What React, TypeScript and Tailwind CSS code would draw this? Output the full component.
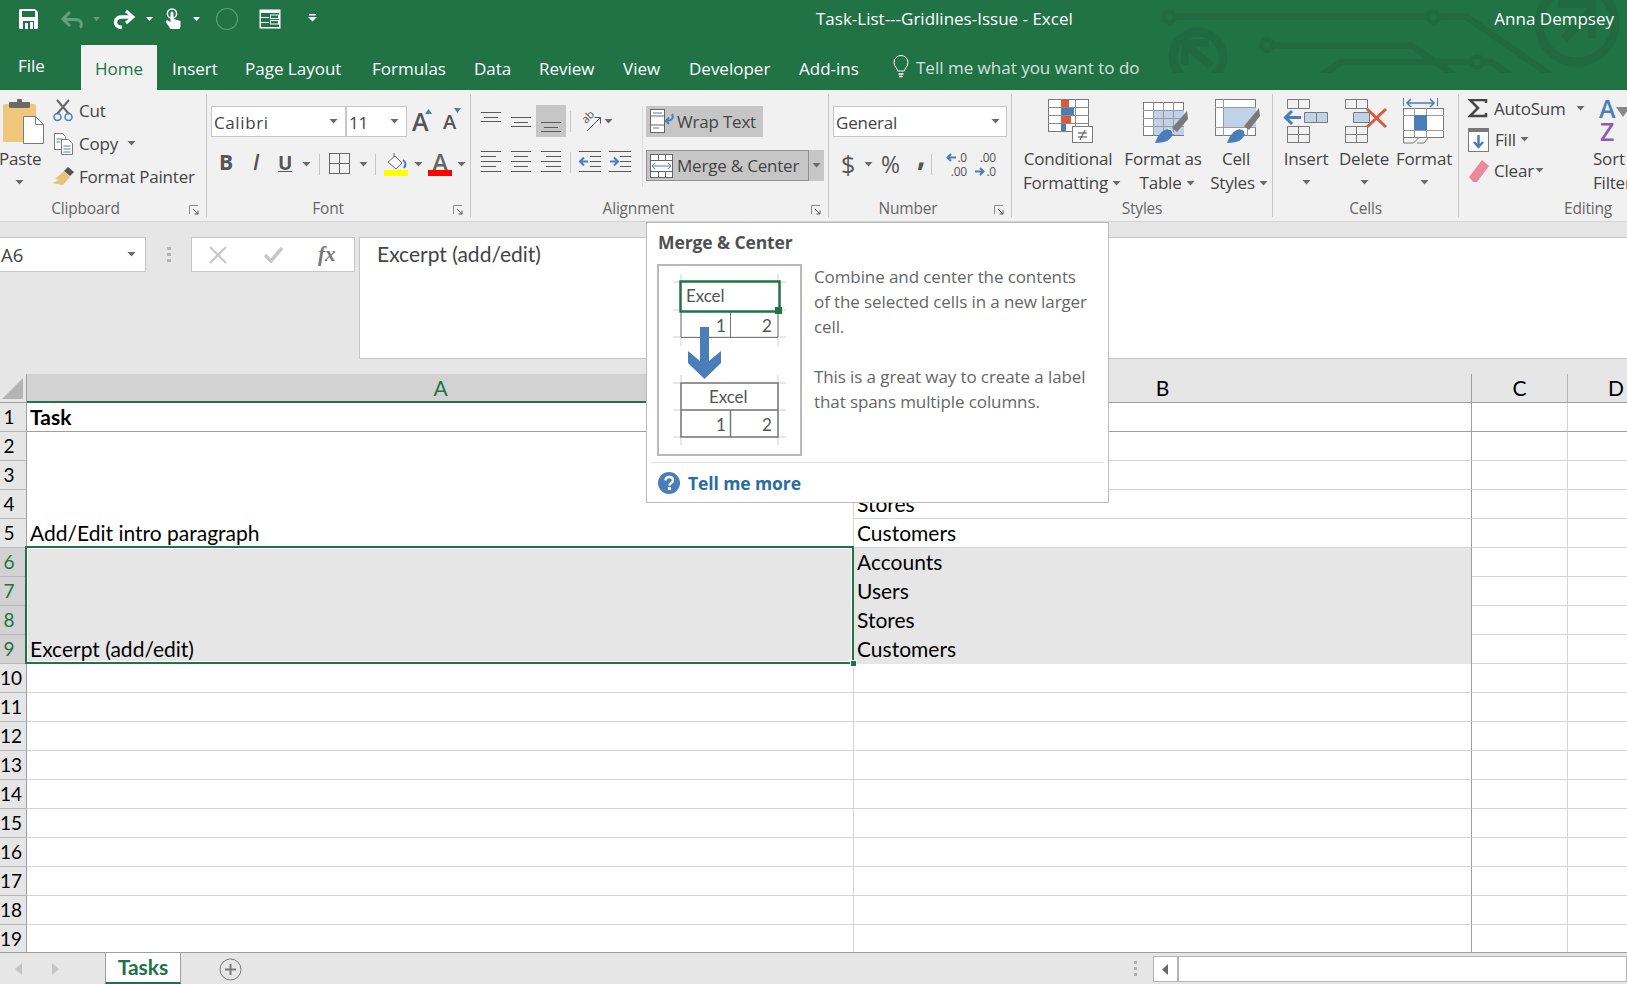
import React from "react";

const GREEN = "#217346";
const BLUE = "#4a7eba";
const RED = "#dc5939";

const Caret = ({ className = "", white = false }: { className?: string; white?: boolean }) => (
  <svg width="9" height="5" viewBox="0 0 9 5" className={`shrink-0 ${className}`}>
    <polygon points="0.5,0 8.5,0 4.5,4.5" fill={white ? "#ffffff" : "#6a6a6a"} />
  </svg>
);

const Launcher = () => (
  <svg width="10" height="10" viewBox="0 0 10 10" className="absolute right-[7px] top-[8px]">
    <path d="M0.5 9V0.5H9" fill="none" stroke="#8a8a8a" />
    <path d="M4 4L9 9M9 5.5V9H5.5" fill="none" stroke="#555555" />
  </svg>
);

const GroupLabel = ({ children, className = "", launcher = true }: { children: string; className?: string; launcher?: boolean }) => (
  <div className={`relative mt-auto -mb-[4px] h-[24px] flex items-center justify-center text-[15.5px] text-[#666666] ${className}`}>
    {children}
    {launcher && <Launcher />}
  </div>
);

// align-icon: list of [x1, x2, y]
const Lines = ({ rows, blue }: { rows: number[][]; blue?: React.ReactNode }) => (
  <svg width="24" height="24" viewBox="0 0 24 24">
    {rows.map((r, i) => (
      <line key={i} x1={r[0]} x2={r[1]} y1={r[2] + 0.5} y2={r[2] + 0.5} stroke="#5a5a5a" />
    ))}
    {blue}
  </svg>
);

const Sep = ({ className = "" }: { className?: string }) => <div className={`w-px bg-[#c6c6c6] ${className}`} />;

const QuickAccess = () => (
  <div className="w-[816px] h-full relative shrink-0">
    <svg width="330" height="40" viewBox="0 0 330 40" className="absolute left-0 top-0">
      {/* save */}
      <path d="M19 10.5a1.5 1.5 0 0 1 1.5-1.5H35l3 3v15.5a1.5 1.5 0 0 1-1.5 1.5h-16a1.5 1.5 0 0 1-1.5-1.5z" fill="#ffffff" />
      <rect x="22" y="11" width="13" height="6" fill={GREEN} />
      <rect x="23" y="21" width="11" height="8" fill={GREEN} />
      <rect x="25" y="23" width="3" height="6" fill="#ffffff" />
      <rect x="30" y="22" width="3" height="7" fill="#ffffff" />
      {/* undo (dim) */}
      <path d="M80 27.5c1.5-1 1.5-3 1-5-.8-2.5-3.5-3-6-3H63" fill="none" stroke="#64a07f" strokeWidth="3" />
      <path d="M70 12l-7 7 7 7" fill="none" stroke="#64a07f" strokeWidth="3" />
      <polygon points="93,17 100,17 96.5,21" fill="#64a07f" />
      {/* redo */}
      <path d="M122 27.5c-5-.5-7-3-6.5-6 .5-3 3-4.5 6.5-4.5h11" fill="none" stroke="#ffffff" strokeWidth="3.4" />
      <path d="M126 11l7 6-7 6" fill="none" stroke="#ffffff" strokeWidth="3" />
      <polygon points="146,17 153,17 149.5,21" fill="#ffffff" />
      {/* touch */}
      <circle cx="172" cy="13.5" r="4.6" fill="none" stroke="#ffffff" strokeWidth="1.5" />
      <path d="M170.5 13a1.5 1.5 0 0 1 3 0v6l7 2v5.5l-1 2.5h-9l-5-7.5 1.5-1.5 3.5 2z" fill="#ffffff" />
      <polygon points="193,17 200,17 196.5,21" fill="#ffffff" />
      {/* circle */}
      <circle cx="227" cy="19" r="10.5" fill="none" stroke="#5a9a78" strokeWidth="1.2" />
      {/* layout */}
      <rect x="259.5" y="9.5" width="21" height="19" fill="#ffffff" />
      <rect x="261" y="13" width="18" height="14" fill={GREEN} />
      <path d="M261 17.5h8M261 22.5h8" stroke="#ffffff" />
      <rect x="270.5" y="15" width="8" height="3.5" fill="none" stroke="#ffffff" />
      <rect x="270.5" y="20.5" width="8" height="3.5" fill="none" stroke="#ffffff" />
      {/* customize */}
      <rect x="309" y="14" width="7" height="1.5" fill="#ffffff" />
      <polygon points="308,17 317,17 312.5,21.5" fill="#ffffff" />
    </svg>
  </div>
);

const Circuit = () => (
  <svg width="477" height="73" viewBox="1150 0 477 73" className="absolute right-0 top-0" fill="none" stroke="#1f6a41">
    <path d="M1174 16.5H1428M1438 16.5H1466L1552 76" strokeWidth="6.5" />
    <circle cx="1169" cy="17" r="5.5" strokeWidth="4.5" />
    <circle cx="1433" cy="17" r="5.5" strokeWidth="4.5" />
    <circle cx="1198" cy="57" r="25" strokeWidth="9" />
    <path d="M1186 45L1211 66" strokeWidth="8" />
    <path d="M1185 65V43H1209" strokeWidth="7" />
    <path d="M1272 45.5H1412L1458 78" strokeWidth="6.5" />
    <circle cx="1267" cy="45" r="5.5" strokeWidth="4.5" />
    <path d="M1320 76L1342 62H1472M1482 62H1491L1512 76" strokeWidth="6.5" />
    <circle cx="1477" cy="62" r="5.5" strokeWidth="4.5" />
    <circle cx="1577" cy="24" r="38" strokeWidth="9" />
    <path d="M1564 39L1592 10" strokeWidth="9" />
    <path d="M1558 4H1592V38" strokeWidth="8" />
  </svg>
);

const tabs = [
  { label: "Insert", cls: "w-[73px]" },
  { label: "Page Layout", cls: "w-[127px]" },
  { label: "Formulas", cls: "w-[102px]" },
  { label: "Data", cls: "w-[65px]" },
  { label: "Review", cls: "w-[84px]" },
  { label: "View", cls: "w-[66px]" },
  { label: "Developer", cls: "w-[110px]" },
  { label: "Add-ins", cls: "w-[93px]" },
];

const TitleBar = () => (
  <div className="relative h-[90px] bg-[#217346] text-white">
    <Circuit />
    <div className="relative h-[45px] flex items-center text-[17px]">
      <QuickAccess />
      <div className="-mt-[7px]">Task-List---Gridlines-Issue - Excel</div>
      <div className="ml-auto pr-[13px] -mt-[7px]">Anna Dempsey</div>
    </div>
    <div className="relative h-[45px] flex text-[17px]">
      <div className="w-[81px] pl-[18px] pt-[9px] -mt-[1px]">File</div>
      <div className="w-[76px] h-[45px] bg-[#f1f1f1] text-[#217346] text-center leading-[47px]">Home</div>
      <div className="ml-[15px] flex leading-[47px]">
        {tabs.map((t) => (
          <div key={t.label} className={t.cls}>
            {t.label}
          </div>
        ))}
        <div className="flex items-center text-[#d3e3da]">
          <svg width="18" height="24" viewBox="0 0 18 24" className="mr-[6px] -mt-[2px]" fill="none" stroke="#ffffff">
            <path d="M5.5 16c0-3-3.5-4.5-3.5-8.5a7 7 0 0 1 14 0c0 4-3.5 5.5-3.5 8.5z" />
            <path d="M6.5 19h5M7 21.5h4" strokeWidth="1.5" />
          </svg>
          Tell me what you want to do
        </div>
      </div>
    </div>
  </div>
);

const ClipboardGroup = () => (
  <div className="w-[207px] shrink-0 flex flex-col border-r border-[#c6c6c6]">
    <div className="flex">
      <div className="w-[46px] shrink-0 relative">
        <svg width="46" height="53" viewBox="0 94 46 53" className="block">
          <rect x="3" y="104" width="33" height="38" rx="1.5" fill="#f0c87c" />
          <rect x="9" y="102" width="21" height="6" rx="1" fill="#6a6a6a" />
          <rect x="17" y="99" width="5" height="5" rx="1" fill="#6a6a6a" />
          <path d="M23.5 116.5h12l8 8v19h-20z" fill="#ffffff" stroke="#7a7a7a" />
          <path d="M35.5 116.5v8h8" fill="none" stroke="#7a7a7a" />
        </svg>
        <div className="leading-[24px] -ml-[1px]">Paste</div>
        <Caret className="ml-[15px] mt-[9px]" />
      </div>
      <div className="ml-[6px] flex flex-col">
        <div className="h-[33px] flex items-center">
          <svg width="27" height="24" viewBox="0 0 27 24">
            <path d="M5 1l12 14M17 1L5 15" stroke="#666666" strokeWidth="2" />
            <circle cx="5.5" cy="18" r="3.5" fill="none" stroke={BLUE} strokeWidth="1.5" />
            <circle cx="16.5" cy="18" r="3.5" fill="none" stroke={BLUE} strokeWidth="1.5" />
          </svg>
          Cut
        </div>
        <div className="h-[33px] flex items-center">
          <svg width="27" height="24" viewBox="0 0 27 24">
            <path d="M2.5 1.5h8l3 3v13h-11z" fill="#ffffff" stroke="#7a7a7a" />
            <path d="M9.5 7.5h7l4 4v11h-11z" fill="#ffffff" stroke="#7a7a7a" />
            <path d="M4.5 7h6M4.5 10h4M11.5 14h7M11.5 17h7M11.5 20h7" stroke={BLUE} />
          </svg>
          Copy
          <Caret className="ml-[9px]" />
        </div>
        <div className="h-[33px] flex items-center">
          <svg width="27" height="24" viewBox="0 0 27 24" className="-ml-[1px] mr-[1px]">
            <path d="M17 2l6 5-4 4-6-5z" fill="#555555" />
            <path d="M13 6l6 6-7 8-11-2 7-3-4-1z" fill="#e8c27a" />
          </svg>
          Format Painter
        </div>
      </div>
    </div>
    <GroupLabel className="pr-[35px]">Clipboard</GroupLabel>
  </div>
);

const FontGroup = () => (
  <div className="w-[264px] shrink-0 flex flex-col border-r border-[#c6c6c6]">
    <div className="flex items-center ml-[4px] mt-[12px]">
      <div className="w-[135px] h-[31px] bg-white border border-[#c6c6c6] flex items-center pl-[2px] pr-[7px]">
        <span className="tracking-[0.6px] pt-[2px]">Calibri</span>
        <Caret className="ml-auto" />
      </div>
      <div className="w-[61px] h-[31px] bg-white border border-[#c6c6c6] flex items-center pl-[2px] pr-[7px]">
        <span className="pt-[2px]">11</span>
        <Caret className="ml-auto" />
      </div>
      <div className="relative w-[31px] ml-[5px] text-[25px] font-semibold leading-none text-[#555555]">
        A
        <svg width="8" height="5" viewBox="0 0 8 5" className="absolute left-[13px] top-0">
          <polygon points="0,5 7,5 3.5,0" fill={BLUE} />
        </svg>
      </div>
      <div className="relative w-[20px] text-[20px] font-semibold leading-none text-[#555555]">
        A
        <svg width="8" height="5" viewBox="0 0 8 5" className="absolute left-[11px] -top-[4px]">
          <polygon points="0,0 7,0 3.5,5" fill={BLUE} />
        </svg>
      </div>
    </div>
    <div className="flex items-center mt-[15px] ml-[4px] h-[24px] text-[#555555]">
      <div className="w-[30px] text-center text-[21px] font-bold -mt-[2px]">B</div>
      <div className="w-[30px] text-center text-[21px] italic font-semibold -mt-[2px]">I</div>
      <div className="w-[28px] text-center text-[19px] font-bold underline -mt-[2px]">U</div>
      <Caret className="ml-[3px]" />
      <Sep className="h-[21px] ml-[8px]" />
      <svg width="22" height="22" viewBox="0 0 22 22" className="ml-[9px]" fill="none" stroke="#666666">
        <rect x="0.5" y="0.5" width="20" height="20" />
        <path d="M10.5 0v21M0 10.5h21" />
      </svg>
      <Caret className="ml-[8px]" />
      <Sep className="h-[21px] ml-[7px]" />
      <svg width="25" height="25" viewBox="0 0 25 25" className="ml-[8px]">
        <path d="M4 10l7-6 7 7-6 6z" fill="#ffffff" stroke="#666666" />
        <path d="M10 5V1" stroke="#666666" />
        <path d="M19 8c3 2 3 5 1 8" fill="none" stroke={BLUE} strokeWidth="2" />
        <rect x="0" y="18" width="24" height="6" fill="#ffff00" />
      </svg>
      <Caret className="ml-[5px]" />
      <div className="relative w-[24px] ml-[5px] h-[24px]">
        <div className="text-center text-[24px] leading-[20px] font-semibold text-[#666666]">A</div>
        <div className="absolute bottom-0 left-0 w-[24px] h-[6px] bg-[#ff0000]" />
      </div>
      <Caret className="ml-[5px]" />
    </div>
    <GroupLabel className="pr-[21px]">Font</GroupLabel>
  </div>
);

const AlignmentGroup = () => (
  <div className="w-[358px] shrink-0 flex flex-col border-r border-[#c6c6c6]">
    <div className="flex">
      <div className="w-[171px] shrink-0">
        <div className="flex items-center mt-[11px] ml-[5px] h-[32px]">
          <div className="w-[30px] h-[32px] flex justify-center items-center">
            <Lines rows={[[2, 22, 3], [5, 19, 8], [2, 22, 12]]} />
          </div>
          <div className="w-[30px] h-[32px] flex justify-center items-center">
            <Lines rows={[[2, 22, 8], [5, 19, 13], [2, 22, 17]]} />
          </div>
          <div className="w-[30px] h-[32px] flex justify-center items-center bg-[#c6c6c6]">
            <Lines rows={[[2, 22, 13], [5, 19, 18], [2, 22, 22]]} />
          </div>
          <Sep className="h-[21px] ml-[4px]" />
          <svg width="22" height="21" viewBox="0 0 22 21" className="ml-[9px] overflow-visible" fill="none" stroke="#555555">
            <text x="6" y="13" fontSize="11" fill="#555555" stroke="none" transform="rotate(-45 6 13)">ab</text>
            <path d="M7 20L20 7M14.5 6.500H20.500V12.500" />
          </svg>
          <Caret className="ml-[2px]" />
        </div>
        <div className="flex items-center mt-[13px] ml-[5px] h-[24px]">
          <div className="w-[30px] flex justify-center">
            <Lines rows={[[2, 22, 1], [2, 17, 6], [2, 22, 11], [2, 17, 16], [2, 22, 21]]} />
          </div>
          <div className="w-[30px] flex justify-center">
            <Lines rows={[[2, 22, 1], [5, 19, 6], [2, 22, 11], [5, 19, 16], [2, 22, 21]]} />
          </div>
          <div className="w-[30px] flex justify-center">
            <Lines rows={[[2, 22, 1], [7, 22, 6], [2, 22, 11], [7, 22, 16], [2, 22, 21]]} />
          </div>
          <Sep className="h-[21px] ml-[4px]" />
          <div className="ml-[7px]">
            <Lines
              rows={[[1, 23, 1], [12, 23, 6], [12, 23, 11], [12, 23, 16], [1, 23, 21]]}
              blue={<path d="M10 11.5H2M6 7.5l-4 4 4 4" fill="none" stroke={BLUE} strokeWidth="2" />}
            />
          </div>
          <div className="ml-[6px]">
            <Lines
              rows={[[1, 23, 1], [12, 23, 6], [12, 23, 11], [12, 23, 16], [1, 23, 21]]}
              blue={<path d="M2 11.5h8M6 7.5l4 4-4 4" fill="none" stroke={BLUE} strokeWidth="2" />}
            />
          </div>
        </div>
      </div>
      <div className="w-px h-[81px] mt-[12px] bg-[#dcdcdc]" />
      <div className="ml-[3px]">
        <div className="mt-[12px] w-[117px] h-[31px] bg-[#c6c6c6] flex items-center pl-[4px]">
          <svg width="26" height="25" viewBox="0 0 26 25" className="mr-[1px] shrink-0">
            <rect x="0.5" y="0.5" width="14" height="23" fill="#ffffff" stroke="#666666" />
            <path d="M0 7h14M0 16h14" stroke="#666666" />
            <path d="M3 4h9M3 19h6" stroke={BLUE} />
            <path d="M22 5c2 4 0 7-6 7M19 8.5l-3 3.5 3 3" fill="none" stroke={BLUE} strokeWidth="2" />
          </svg>
          <span>Wrap Text</span>
        </div>
        <div className="mt-[13px] flex">
          <div className="w-[163px] h-[31px] bg-[#c6c6c6] border border-[#8f8f8f] flex items-center pl-[3px]">
            <svg width="24" height="24" viewBox="0 0 24 24" className="mr-[3px] shrink-0">
              <rect x="0.5" y="0.5" width="22" height="23" fill="#ffffff" stroke="#666666" />
              <path d="M0 6.5h23M0 17.5h23M8.5 0v6M15.5 0v6M8.5 18v6M15.5 18v6" stroke="#666666" />
              <path d="M2 12h19M5 9l-3 3 3 3M18 9l3 3-3 3" fill="none" stroke={BLUE} />
            </svg>
            <span>Merge &amp; Center</span>
          </div>
          <div className="w-[15px] h-[31px] bg-[#c6c6c6] flex items-center justify-center">
            <Caret />
          </div>
        </div>
      </div>
    </div>
    <GroupLabel className="pr-[22px]">Alignment</GroupLabel>
  </div>
);

const NumberGroup = () => (
  <div className="w-[183px] shrink-0 flex flex-col border-r border-[#c6c6c6]">
    <div className="ml-[4px] mt-[12px] w-[174px] h-[31px] bg-white border border-[#c6c6c6] flex items-center pl-[2px] pr-[6px]">
      <span className="pt-[2px]">General</span>
      <Caret className="ml-auto" />
    </div>
    <div className="flex items-center mt-[15px] ml-[12px] h-[24px] text-[#555555]">
      <div className="text-[25px] w-[16px] leading-none">$</div>
      <Caret className="ml-[7px]" />
      <div className="ml-[8px] w-[24px] text-[23px] leading-none">%</div>
      <div className="ml-[12px] w-[7px] text-[30px] font-bold leading-[14px] -mt-[18px]">,</div>
      <Sep className="h-[21px] ml-[7px]" />
      <div className="ml-[8px] w-[27px] text-[12px] flex flex-col gap-px text-right">
        <div className="h-[13px] leading-[13px] flex items-center justify-end">
          <svg width="10" height="9" viewBox="0 0 10 9" className="mr-[1px]">
            <path d="M10 4.5H2M5 1L1.5 4.5 5 8" fill="none" stroke={BLUE} strokeWidth="2" />
          </svg>
          .0
        </div>
        <div className="h-[13px] leading-[13px]">.00</div>
      </div>
      <div className="ml-[7px] w-[22px] text-[12px] flex flex-col gap-px text-right">
        <div className="h-[13px] leading-[13px]">.00</div>
        <div className="h-[13px] leading-[13px] flex items-center justify-end">
          <svg width="10" height="9" viewBox="0 0 10 9" className="mr-[1px]">
            <path d="M0 4.5h8M5 1l3.5 3.5L5 8" fill="none" stroke={BLUE} strokeWidth="2" />
          </svg>
          .0
        </div>
      </div>
    </div>
    <GroupLabel className="pr-[24px]">Number</GroupLabel>
  </div>
);

const StylesGroup = () => (
  <div className="w-[261px] shrink-0 flex flex-col border-r border-[#c6c6c6]">
    <div className="flex">
      <div className="w-[112px] shrink-0 text-center leading-[24px]">
        <svg width="112" height="53" viewBox="1012 94 112 53" className="block">
          <rect x="1048.5" y="99.5" width="40" height="32" fill="#ffffff" stroke="#7a7a7a" />
          <path d="M1061.5 99v33M1075.5 99v33M1048 107.5h41M1048 115.5h41M1048 123.5h41" stroke="#8a8a8a" />
          <rect x="1061" y="100" width="8" height="7" fill={RED} />
          <rect x="1061" y="108" width="13" height="7" fill={BLUE} />
          <rect x="1061" y="116" width="10" height="7" fill={RED} />
          <rect x="1061" y="124" width="5" height="7" fill={BLUE} />
          <rect x="1072.5" y="126.5" width="20" height="16" fill="#ffffff" stroke="#7a7a7a" />
          <path d="M1078 133h9M1078 137h9M1085 130l-5 10" stroke="#444444" />
        </svg>
        <div>Conditional</div>
        <div className="flex items-center justify-center pl-[8px]">
          Formatting
          <Caret className="ml-[4px]" />
        </div>
      </div>
      <div className="w-[78px] shrink-0 text-center leading-[24px] whitespace-nowrap">
        <svg width="78" height="53" viewBox="1124 94 78 53" className="block">
          <rect x="1143.5" y="102.5" width="40" height="33" fill="#ffffff" stroke="#7a7a7a" />
          <rect x="1154" y="111" width="30" height="24" fill="#bfd2e8" />
          <path d="M1153.5 102v33M1163.5 102v33M1173.5 102v33M1143 110.5h41M1143 118.5h41M1143 126.5h41" stroke="#9a9a9a" />
          <path d="M1187 111l1 8-11 13-5-4z" fill="#7a7a7a" />
          <path d="M1155 143c2-6 6-13 13-14 3 0 5 2 5 5-2 5-6 9-18 9z" fill={BLUE} />
          <path d="M1168 129c3 0 5 2 5 5" fill="none" stroke="#ffffff" />
        </svg>
        <div>Format as</div>
        <div className="flex items-center justify-center pl-[8px]">
          Table
          <Caret className="ml-[4px]" />
        </div>
      </div>
      <div className="w-[68px] shrink-0 text-center leading-[24px]">
        <svg width="68" height="53" viewBox="1202 94 68 53" className="block">
          <rect x="1215.5" y="99.5" width="40" height="36" fill="#ffffff" stroke="#7a7a7a" />
          <rect x="1223" y="107" width="33" height="21" fill="#bfd2e8" />
          <path d="M1223.5 99v37M1215 107.5h41M1215 127.5h41M1247.5 127v9" stroke="#9a9a9a" />
          <path d="M1259 108l1 8-11 14-5-4z" fill="#7a7a7a" />
          <path d="M1227 143c2-6 6-13 13-14 3 0 5 2 5 5-2 5-6 9-18 9z" fill={BLUE} />
          <path d="M1240 129c3 0 5 2 5 5" fill="none" stroke="#ffffff" />
        </svg>
        <div>Cell</div>
        <div className="flex items-center justify-center pl-[6px]">
          Styles
          <Caret className="ml-[4px]" />
        </div>
      </div>
    </div>
    <GroupLabel launcher={false}>Styles</GroupLabel>
  </div>
);

const CellsGroup = () => (
  <div className="w-[186px] shrink-0 flex flex-col border-r border-[#c6c6c6]">
    <div className="flex">
      <div className="w-[66px] shrink-0 flex flex-col items-center leading-[24px]">
        <svg width="66" height="53" viewBox="1273 94 66 53" className="block" fill="none">
          <path d="M1287.5 99.5h22v9h-22zM1298.5 99v10M1287.5 126.5h22v16h-22zM1298.5 126v17M1287 134.5h23" stroke="#7a7a7a" />
          <path d="M1304.5 112.5h23v10h-23zM1316.5 112v11" stroke="#7a7a7a" fill="#bfd2e8" />
          <path d="M1301 117.5h-15M1292 111l-6.5 6.5 6.5 6.5" stroke={BLUE} strokeWidth="3" />
        </svg>
        <div>Insert</div>
        <Caret className="mt-[9px]" />
      </div>
      <div className="w-[50px] shrink-0 flex flex-col items-center leading-[24px]">
        <svg width="50" height="53" viewBox="1339 94 50 53" className="block" fill="none">
          <path d="M1345.5 99.5h22v9h-22zM1356.5 99v10M1345.5 126.5h22v16h-22zM1356.5 126v17M1345 134.5h23" stroke="#7a7a7a" />
          <path d="M1353.5 112.5h16v10h-16z" stroke="#7a7a7a" fill="#bfd2e8" />
          <path d="M1367 109l19 18M1386 109l-19 18" stroke={RED} strokeWidth="3" />
        </svg>
        <div>Delete</div>
        <Caret className="mt-[9px]" />
      </div>
      <div className="w-[70px] shrink-0 flex flex-col items-center leading-[24px]">
        <svg width="70" height="53" viewBox="1389 94 70 53" className="block" fill="none">
          <path d="M1403.5 98v8M1437.5 98v8" stroke={BLUE} />
          <path d="M1407 103h27M1411 99l-4 4 4 4M1430 99l4 4-4 4" stroke={BLUE} strokeWidth="1.5" />
          <rect x="1403.5" y="108.5" width="40" height="29" fill="#ffffff" stroke="#7a7a7a" />
          <path d="M1414.5 108v30M1426.5 108v30M1403 115.5h41M1403 130.5h41" stroke="#9a9a9a" />
          <rect x="1414" y="115" width="13" height="15" fill={BLUE} />
          <path d="M1403.5 138v5h10l5-5M1417 143h7l4-5" stroke="#7a7a7a" />
        </svg>
        <div>Format</div>
        <Caret className="mt-[9px]" />
      </div>
    </div>
    <GroupLabel launcher={false}>Cells</GroupLabel>
  </div>
);

const EditingGroup = () => (
  <div className="w-[168px] shrink-0 flex flex-col">
    <div className="flex">
      <div className="w-[131px] shrink-0 pl-[9px] -mt-[1px]">
        <div className="h-[31px] flex items-center">
          <svg width="20" height="19" viewBox="0 0 20 19" className="mr-[6px]">
            <path d="M18 4V1H2l8 8-8 8h16v-3" fill="none" stroke="#444444" strokeWidth="2.5" />
          </svg>
          AutoSum
          <Caret className="ml-[10px]" />
        </div>
        <div className="h-[31px] flex items-center">
          <svg width="22" height="24" viewBox="0 0 22 24" className="mr-[5px]">
            <rect x="0.5" y="0.5" width="20" height="23" fill="#ffffff" stroke="#7a7a7a" />
            <rect x="0" y="0" width="21" height="4" fill="#7a7a7a" />
            <path d="M10.5 7v12M6 14l4.5 5 4.5-5" fill="none" stroke={BLUE} strokeWidth="2.5" />
          </svg>
          Fill
          <Caret className="ml-[4px]" />
        </div>
        <div className="h-[31px] flex items-center">
          <svg width="22" height="24" viewBox="0 0 22 24" className="mr-[4px]">
            <path d="M14 1l7 6L9 23H5L1 18z" fill="#ea8a9c" />
          </svg>
          Clear
          <Caret className="ml-[1px]" />
        </div>
      </div>
      <div className="leading-[24px] whitespace-nowrap">
        <div className="h-[53px] relative">
          <div className="absolute left-[9px] top-[3px] text-[25px] leading-[23px] text-[#4a7eba] font-semibold">A</div>
          <div className="absolute left-[10px] top-[26px] text-[25px] leading-[23px] text-[#8a5db0] font-semibold">Z</div>
          <svg width="14" height="14" viewBox="0 0 14 14" className="absolute left-[26px] top-[13px]">
            <path d="M0 0h14L7 10z" fill="#888888" />
          </svg>
        </div>
        <div className="pl-[3px]">Sort &amp;</div>
        <div className="pl-[3px]">Filter</div>
      </div>
    </div>
    <GroupLabel className="pl-[90px] whitespace-nowrap" launcher={false}>Editing</GroupLabel>
  </div>
);

const Ribbon = () => (
  <div className="h-[132px] bg-[#f1f1f1] border-b border-[#d4d4d4] flex py-[4px] overflow-hidden text-[#444444] text-[17px] tracking-[-0.2px]">
    <ClipboardGroup />
    <FontGroup />
    <AlignmentGroup />
    <NumberGroup />
    <StylesGroup />
    <CellsGroup />
    <EditingGroup />
  </div>
);

const FormulaBar = () => (
  <div className="h-[152px] bg-[#e6e6e6] pt-[15px] flex items-start text-[#444444]">
    <div className="w-[146px] h-[35px] bg-white border border-l-0 border-[#c6c6c6] flex items-center pl-[1px] pr-[9px] shrink-0 text-[18.5px]">
      A6
      <Caret className="ml-auto" />
    </div>
    <div className="w-[45px] flex flex-col items-center gap-[3px] pt-[10px] shrink-0">
      <div className="w-[4px] h-[3px] bg-[#b4b4b4]" />
      <div className="w-[4px] h-[3px] bg-[#b4b4b4]" />
      <div className="w-[4px] h-[3px] bg-[#b4b4b4]" />
    </div>
    <div className="w-[164px] h-[35px] bg-white border border-[#c6c6c6] flex items-center shrink-0">
      <svg width="18" height="18" viewBox="0 0 18 18" className="ml-[17px]">
        <path d="M1 1l16 16M17 1L1 17" stroke="#c8c8c8" strokeWidth="2.2" />
      </svg>
      <svg width="20" height="18" viewBox="0 0 20 18" className="ml-[37px]">
        <path d="M1 9l6 6L18 2" fill="none" stroke="#c8c8c8" strokeWidth="3.5" />
      </svg>
      <div className="ml-[34px] text-[21px] italic font-semibold text-[#777777] [font-family:'Liberation_Serif',serif]">fx</div>
    </div>
    <div className="ml-[4px] flex-1 h-[122px] bg-white border border-r-0 border-[#c6c6c6] pl-[17px] pt-[4px] leading-[24px] text-[21px] [font-family:Lato,sans-serif]">
      Excerpt (add/edit)
    </div>
  </div>
);

const colB: Record<number, string> = {
  2: "Accounts",
  3: "Users",
  4: "Stores",
  5: "Customers",
  6: "Accounts",
  7: "Users",
  8: "Stores",
  9: "Customers",
};

const Sheet = () => {
  const rows = Array.from({ length: 19 }, (_, i) => i + 1);
  return (
    <div className="h-[578px] overflow-hidden bg-white">
      <div className="grid grid-cols-[27px_827px_618px_96px_96px] auto-rows-[29px] text-[21px] text-black [font-family:Lato,sans-serif]">
        <div className="bg-[#e6e6e6] border-r border-b border-[#9f9f9f] flex items-center pl-[2px] pt-[1px]">
          <svg width="21" height="21" viewBox="0 0 21 21">
            <polygon points="21,0 21,21 0,21" fill="#b4b4b4" />
          </svg>
        </div>
        <div className="bg-[#d2d2d2] border-b-2 border-[#217346] text-[#217346] text-center leading-[27px]">A</div>
        <div className="bg-[#e6e6e6] border-r border-b border-[#9f9f9f] text-center leading-[27px]">B</div>
        <div className="bg-[#e6e6e6] border-r border-b border-r-[#b4b4b4] border-b-[#9f9f9f] text-center leading-[27px]">C</div>
        <div className="bg-[#e6e6e6] border-b border-[#9f9f9f] text-center leading-[27px]">D</div>
        {rows.map((r) => {
          const selected = r >= 6 && r <= 9;
          const lineCls = r === 1 ? "border-[#9f9f9f]" : "border-[#d4d4d4]";
          return (
            <React.Fragment key={r}>
              <div
                className={`border-r border-b border-r-[#9f9f9f] border-b-[#b8b8b8] text-[19px] ${selected ? "bg-[#d2d2d2] text-[#217346]" : "bg-[#e6e6e6]"}`}
              >
                <div className="w-[18px] text-center leading-[27px] whitespace-nowrap">{r}</div>
              </div>

              {r === 1 && <div className={`border-b ${lineCls} font-bold pl-[3px] leading-[27px]`}>Task</div>}
              {r === 2 && (
                <div className="row-span-4 border-r border-b border-[#d4d4d4] pl-[3px] flex items-end">
                  <div className="leading-[28px]">Add/Edit intro paragraph</div>
                </div>
              )}
              {r === 6 && (
                <div className="row-span-4 relative bg-[#e6e6e6] pl-[3px] flex items-end">
                  <div className="leading-[27px] pb-[2px]">Excerpt (add/edit)</div>
                  <div className="absolute -left-[2px] -top-[2px] right-0 bottom-0 border-2 border-[#217346]">
                    <div className="w-full h-full border border-white" />
                  </div>
                  <div className="absolute -right-[3px] -bottom-[3px] w-[7px] h-[7px] bg-[#217346] border border-white" />
                </div>
              )}
              {r >= 10 && <div className={`border-r border-b ${lineCls}`} />}

              <div
                className={
                  selected
                    ? "bg-[#e6e6e6] border-r border-[#9f9f9f] pl-[3px] leading-[27px]"
                    : `border-b ${lineCls} border-r border-r-[#9f9f9f] pl-[3px] leading-[27px]`
                }
              >
                {colB[r]}
              </div>
              <div className={`border-b ${lineCls} border-r border-r-[#d4d4d4]`} />
              <div className={`border-b ${lineCls}`} />
            </React.Fragment>
          );
        })}
      </div>
    </div>
  );
};

const SheetBar = () => (
  <div className="h-[32px] bg-[#e6e6e6] border-t border-[#9f9f9f] flex items-start">
    <svg width="8" height="12" viewBox="0 0 8 12" className="ml-[15px] mt-[10px]">
      <polygon points="7,0 7,12 0,6" fill="#c4c4c4" />
    </svg>
    <svg width="8" height="12" viewBox="0 0 8 12" className="ml-[28px] mt-[10px]">
      <polygon points="1,0 1,12 8,6" fill="#c4c4c4" />
    </svg>
    <div className="ml-[46px] -mt-px w-[76px] h-[32px] bg-white border-x border-t border-[#9f9f9f] border-b-2 border-b-[#217346] text-center text-[#217346] font-bold text-[21px] leading-[27px] [font-family:Lato,sans-serif]">
      Tasks
    </div>
    <svg width="23" height="23" viewBox="0 0 23 23" className="ml-[38px] mt-[5px]" fill="none" stroke="#7a7a7a">
      <circle cx="11.5" cy="11.5" r="10.5" />
      <path d="M6 11.5h11M11.5 6v11" strokeWidth="2" />
    </svg>
    <div className="ml-[892px] mt-[8px] flex flex-col gap-[3px]">
      <div className="w-[3px] h-[3px] bg-[#aeaeae]" />
      <div className="w-[3px] h-[3px] bg-[#aeaeae]" />
      <div className="w-[3px] h-[3px] bg-[#aeaeae]" />
    </div>
    <div className="ml-[16px] mt-[3px] h-[26px] flex-1 flex bg-white border border-[#b4b4b4]">
      <div className="w-[25px] border-r-2 border-[#b4b4b4] flex items-center justify-center">
        <svg width="7" height="11" viewBox="0 0 7 11">
          <polygon points="6,0 6,11 0,5.5" fill="#6a6a6a" />
        </svg>
      </div>
    </div>
  </div>
);

const Tooltip = () => (
  <div className="absolute left-[646px] top-[222px] w-[463px] h-[281px] bg-white border border-[#bababa] text-[#666666] text-[17px] tracking-[-0.1px]">
    <div className="pl-[11px] pt-[7px] h-[41px] font-bold text-[#505050] leading-[24px] text-[17.5px]">Merge &amp; Center</div>
    <div className="flex pl-[10px]">
      <div className="w-[145px] h-[192px] border-2 border-[#b9b9b9] shrink-0">
        <svg width="141" height="188" viewBox="659 267 141 188" className="block">
          <g stroke="#cfcfcf" fill="none">
            <path d="M681 275v72M778 275v72M673 283h113M673 311h113M673 338h113" />
            <path d="M681 376v70M778 376v70M673 384h113M673 411h113M673 438h113" />
          </g>
          <path d="M681 338.5h97M730.5 313v25M681 313v25M778 313v25" stroke="#7a7a7a" fill="none" />
          <rect x="680.5" y="282.5" width="99" height="30" fill="#ffffff" stroke="#217346" strokeWidth="2.5" />
          <rect x="775" y="308" width="7" height="7" fill="#217346" />
          <rect x="681" y="384" width="97" height="54" fill="none" stroke="#7a7a7a" strokeWidth="1.5" />
          <path d="M681 411h97M730.5 411v27" stroke="#7a7a7a" strokeWidth="1.5" />
          <polygon points="700,328 709,328 709,362 721,352 721,364 704.5,380 688,364 688,352 700,362" fill={BLUE} />
          <g fill="#555555" fontSize="17" className="[font-family:Lato,sans-serif]">
            <text x="686" y="303">Excel</text>
            <text x="709" y="404">Excel</text>
            <text x="716" y="333">1</text>
            <text x="762" y="333">2</text>
            <text x="716" y="432">1</text>
            <text x="762" y="432">2</text>
          </g>
        </svg>
      </div>
      <div className="ml-[12px] leading-[25px] whitespace-nowrap">
        <div>Combine and center the contents</div>
        <div>of the selected cells in a new larger</div>
        <div>cell.</div>
        <div className="h-[25px]" />
        <div>This is a great way to create a label</div>
        <div>that spans multiple columns.</div>
      </div>
    </div>
    <div className="mx-[4px] mt-[6px] border-t border-[#e0e0e0] h-[41px] flex items-center pl-[7px] text-[#2b6ca3] font-bold text-[17.5px]">
      <svg width="22" height="22" viewBox="0 0 22 22" className="mr-[8px]">
        <circle cx="11" cy="11" r="11" fill={BLUE} />
        <path d="M7.5 8.5c0-2 1.5-3.5 3.7-3.5s3.8 1.3 3.8 3.2c0 2.8-3.5 2.8-3.5 5.3" fill="none" stroke="#ffffff" strokeWidth="2.4" />
        <rect x="10" y="15" width="3" height="3" fill="#ffffff" />
      </svg>
      Tell me more
    </div>
  </div>
);

export default function App() {
  return (
    <div className="relative w-[1627px] h-[984px] overflow-hidden bg-white [font-family:'Open_Sans',sans-serif]">
      <TitleBar />
      <Ribbon />
      <FormulaBar />
      <Sheet />
      <SheetBar />
      <Tooltip />
    </div>
  );
}
